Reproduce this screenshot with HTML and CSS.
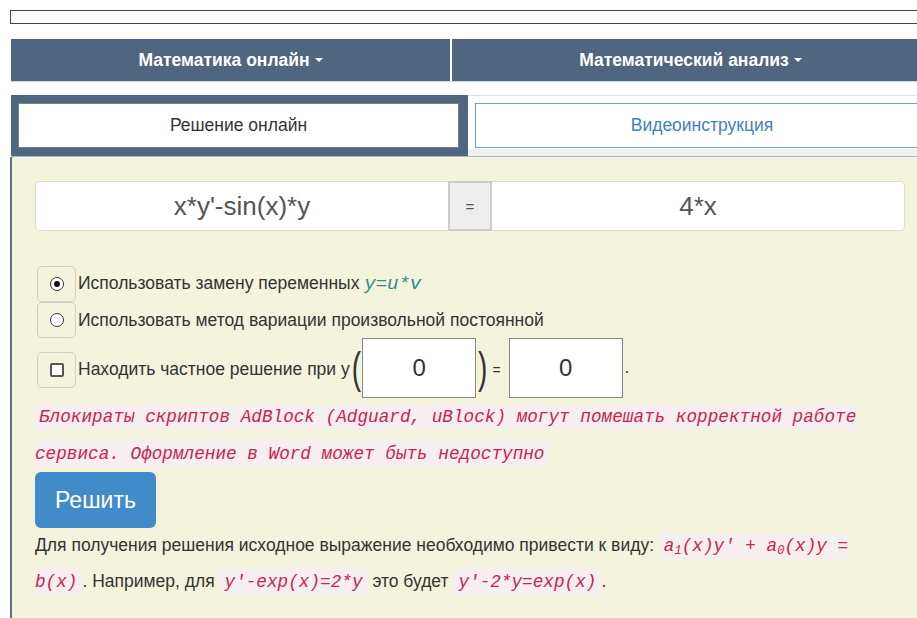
FILE: index.html
```html
<!DOCTYPE html>
<html lang="ru">
<head>
<meta charset="utf-8">
<title>Решение дифференциальных уравнений онлайн</title>
<link rel="stylesheet" href="styles.css">
</head>
<body>
<div class="page">
  <div class="topbox"></div>

  <nav class="menu">
    <div class="menu-item first">Математика онлайн <span class="caret"></span></div>
    <div class="menu-item second">Математический анализ <span class="caret"></span></div>
  </nav>

  <div class="tabs">
    <div class="tab active"><div class="tab-btn">Решение онлайн</div></div>
    <div class="tab"><div class="tab-btn link">Видеоинструкция</div></div>
  </div>

  <div class="panel">
    <div class="eq-group">
      <div class="eq-input left">x*y'-sin(x)*y</div>
      <div class="eq-addon">=</div>
      <div class="eq-input right">4*x</div>
    </div>

    <div class="options">
      <div class="opt">
        <span class="opt-box"><span class="radio checked"></span></span>
        <span class="opt-text">Использовать замену переменных <i class="math">y=u*v</i></span>
      </div>
      <div class="opt">
        <span class="opt-box"><span class="radio"></span></span>
        <span class="opt-text">Использовать метод вариации произвольной постоянной</span>
      </div>
      <div class="opt opt-cond">
        <span class="opt-box"><span class="check"></span></span>
        <span class="opt-text">Находить частное решение при y</span>
        <span class="paren">(</span>
        <span class="cond-input">0</span>
        <span class="paren">)</span>
        <span class="eq-sign">=</span>
        <span class="cond-input">0</span>
        <span class="dot">.</span>
      </div>
    </div>

    <p class="warn"><code>Блокираты скриптов AdBlock (Adguard, uBlock) могут помешать корректной работе сервиса. Оформление в Word может быть недоступно</code></p>

    <button class="solve" type="button">Решить</button>

    <p class="hint">Для получения решения исходное выражение необходимо привести к виду: <code>a<sub>1</sub>(x)y' + a<sub>0</sub>(x)y = b(x)</code>. Например, для <code>y'-exp(x)=2*y</code> это будет <code>y'-2*y=exp(x)</code>.</p>
  </div>
</div>
</body>
</html>
```

FILE: styles.css
```css
html, body {
  margin: 0;
  padding: 0;
  background: #fff;
  overflow: hidden;
}

body {
  font-family: "Liberation Sans", Arial, sans-serif;
  font-size: 17.5px;
  color: #333;
}

.page {
  width: 918px;
  margin-left: 11px;
  padding-top: 10px;
}

/* empty bordered strip at the very top */
.topbox {
  margin-left: -1px;
  height: 12px;
  border: 1px solid #444;
}

/* main dropdown menu */
.menu {
  display: flex;
  margin-top: 15px;
  height: 42px;
  border-bottom: 1px solid #c9d6e3;
}

.menu-item {
  display: flex;
  align-items: center;
  justify-content: center;
  background: #4e6680;
  color: #fff;
  font-weight: bold;
  font-size: 17.5px;
}

.menu-item.first {
  width: 439px;
  margin-right: 2px;
}

.menu-item.second {
  flex: 1;
}

.caret {
  display: inline-block;
  margin-left: 5px;
  border-top: 4px solid #fff;
  border-left: 4px solid transparent;
  border-right: 4px solid transparent;
}

/* tabs */
.tabs {
  display: flex;
  margin-top: 13px;
  height: 61px;
}

.tab {
  box-sizing: border-box;
  flex: 1;
  background: #fff;
  border-top: 1px solid #e2e2e2;
  border-bottom: 7px solid #f0f0f0;
  padding: 7px 0 0 7px;
}

.tab.active {
  flex: 0 0 457px;
  background: #4e6680;
  border: 0;
  padding: 8px 9px 8px 7px;
}

.tab-btn {
  box-sizing: border-box;
  height: 45px;
  display: flex;
  align-items: center;
  justify-content: center;
  background: #fff;
  border: 1px solid #7d7d7d;
  font-size: 17.5px;
  color: #333;
}

.tab-btn.link {
  border-color: #6a9fd6;
  color: #3f7fc4;
}

/* main form area */
.panel {
  margin-left: -1px;
  min-height: 480px;
  background: #f4f4dc;
  border-left: 2px solid #5a6f86;
  border-top: 1px solid #a9b6c3;
  border-top-left-radius: 3px;
  padding: 24px 24px 0 23px;
}

.eq-group {
  display: flex;
  height: 50px;
  width: 870px;
}

.eq-input {
  flex: 1;
  display: flex;
  align-items: center;
  justify-content: center;
  background: #fff;
  border: 1px solid #dcdcd0;
  font-size: 26px;
  color: #555;
}

.eq-input.left {
  border-radius: 5px 0 0 5px;
  border-right: 0;
}

.eq-input.right {
  border-radius: 0 5px 5px 0;
  border-left: 0;
}

.eq-addon {
  flex: 0 0 40px;
  display: flex;
  align-items: center;
  justify-content: center;
  background: #eee;
  border: 2px solid #ccc;
  font-size: 15px;
  color: #555;
}

/* radio / checkbox options */
.options {
  margin-top: 35px;
  margin-left: 2px;
}

.opt {
  display: flex;
  align-items: center;
}

.opt-box {
  box-sizing: border-box;
  width: 39px;
  height: 36px;
  display: flex;
  align-items: center;
  justify-content: center;
  border: 1px solid #cfcfc4;
  border-radius: 5px;
  flex: none;
}

.opt-text {
  margin-left: 2px;
  color: #333;
}

.radio {
  box-sizing: border-box;
  width: 14px;
  height: 14px;
  border: 1px solid #333;
  border-radius: 50%;
  background: #fff;
  display: flex;
  align-items: center;
  justify-content: center;
}

.radio.checked::after {
  content: "";
  width: 6px;
  height: 6px;
  border-radius: 50%;
  background: #111;
}

.check {
  box-sizing: border-box;
  width: 14px;
  height: 14px;
  border: 2px solid #555;
  border-radius: 2px;
  background: #fff;
}

.math {
  font-family: "Liberation Mono", monospace;
  font-size: 19px;
  color: #2a8f8a;
}

.opt-cond {
  height: 60px;
}

.opt-cond .opt-box {
  margin-top: 3px;
}

.opt-cond .opt-text {
  margin-top: 3px;
}

.paren {
  display: inline-block;
  font-size: 28px;
  line-height: 1;
  color: #333;
  transform: scale(1, 1.6);
  margin: 2px 1px 0 2px;
}

.cond-input {
  box-sizing: border-box;
  width: 114px;
  height: 60px;
  display: flex;
  align-items: center;
  justify-content: center;
  background: #fff;
  border: 1px solid #888;
  font-size: 24px;
  color: #333;
}

.eq-sign {
  font-size: 14px;
  margin: 4px 8px 0 4px;
}

.dot {
  align-self: flex-end;
  margin: 0 0 20px 2px;
}

/* inline code look */
code {
  font-family: "Liberation Mono", "DejaVu Sans Mono", monospace;
  font-style: italic;
  font-size: 17.7px;
  color: #c7254e;
  background: #f6eef0;
  padding: 3px 4px;
  border-radius: 4px;
}

.warn {
  margin: 0;
  line-height: 36px;
}

.solve {
  display: block;
  margin-top: 0;
  width: 121px;
  height: 56px;
  border: 0;
  border-radius: 6px;
  background: #428bca;
  color: #fff;
  font-family: "Liberation Sans", Arial, sans-serif;
  font-size: 23px;
  padding: 0;
}

.hint {
  margin: 0;
  line-height: 35px;
}

.hint code {
  padding: 3px 5px;
}

sub {
  font-size: 12px;
  vertical-align: -3px;
  line-height: 0;
}
```
